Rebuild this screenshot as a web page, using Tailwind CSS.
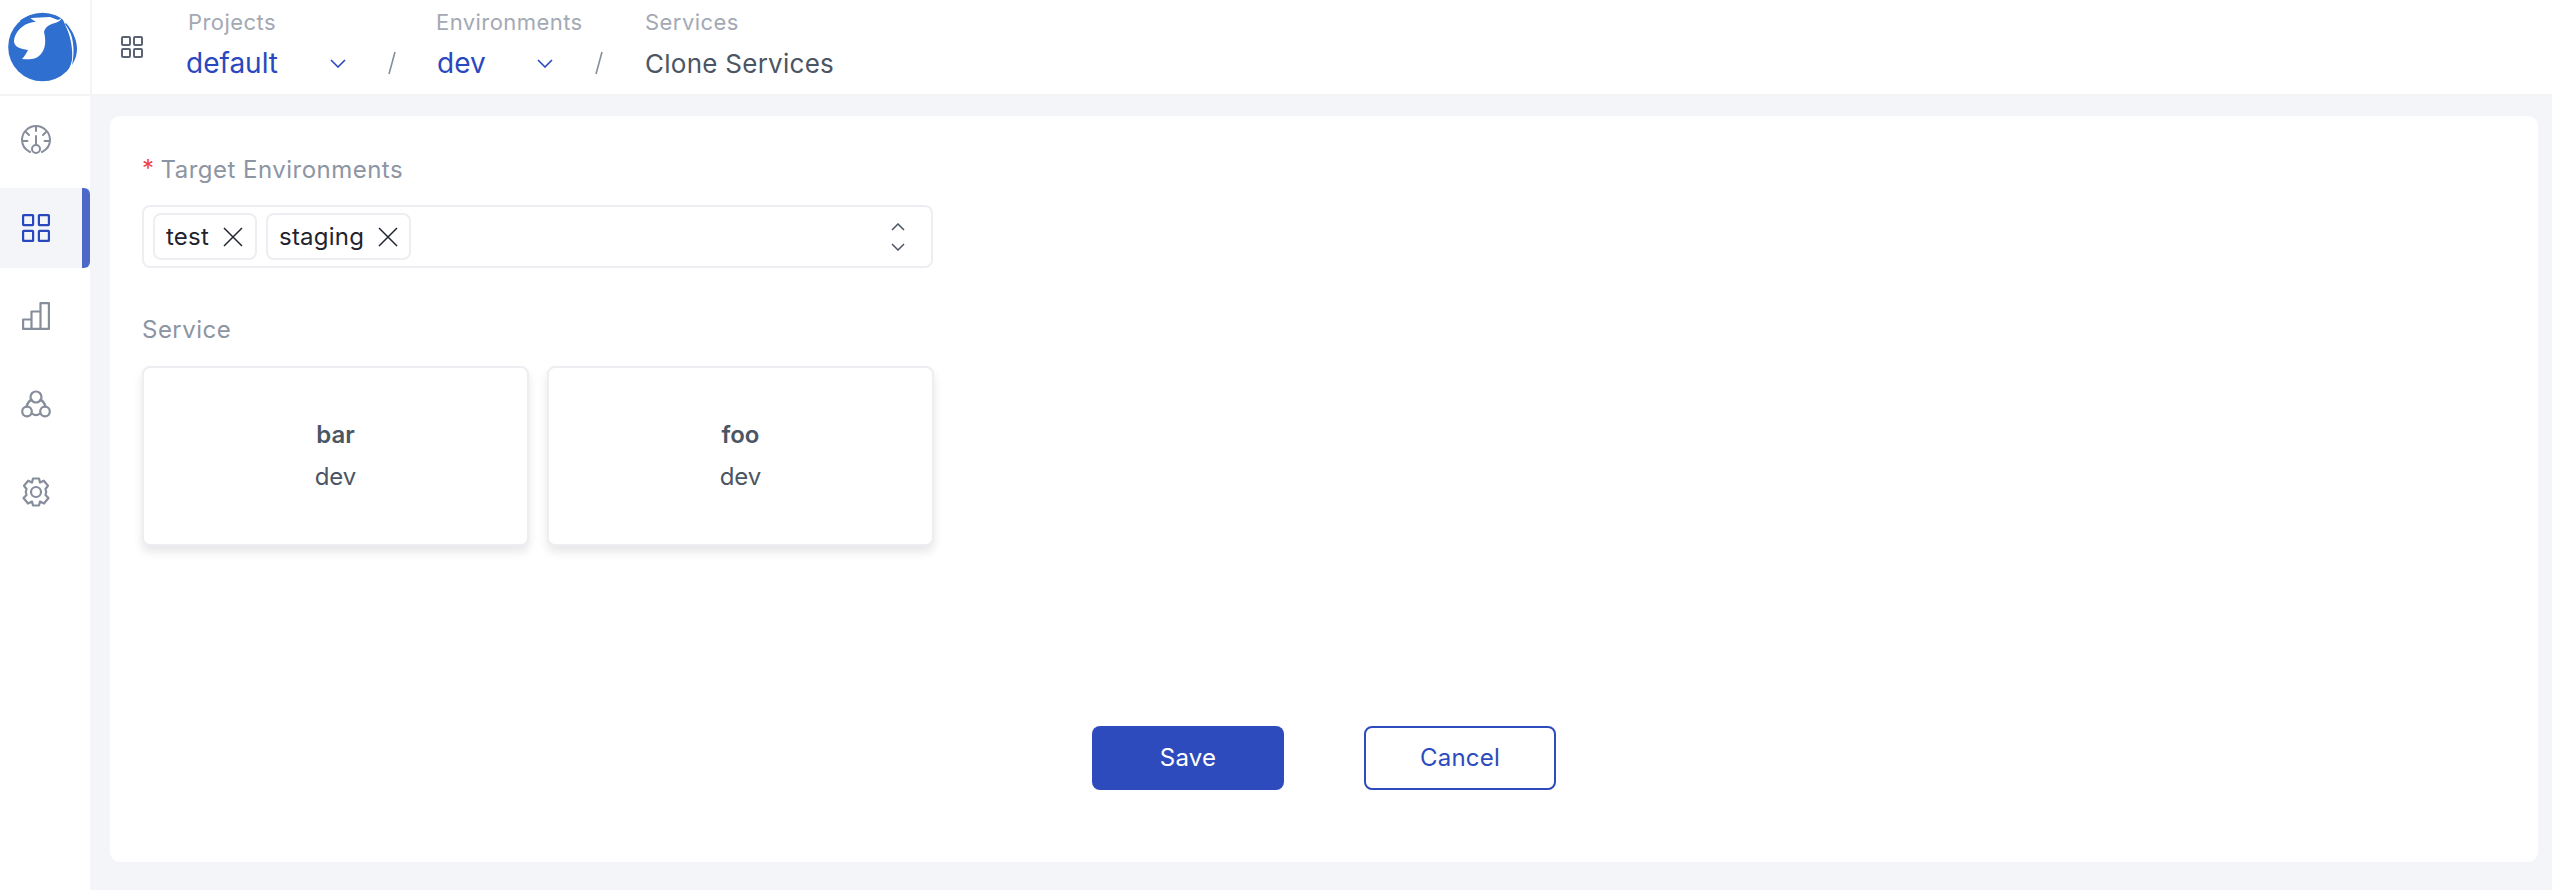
<!DOCTYPE html>
<html>
<head>
<meta charset="utf-8">
<script src="https://cdn.jsdelivr.net/npm/@tailwindcss/browser@4"></script>
</head>
<body class="bg-[#f4f5f9] font-['Inter',sans-serif]">
<div class="w-[2552px] h-[890px] flex flex-col overflow-hidden">
  <header class="h-[94px] bg-white flex shrink-0 border-b-2 border-[#f3f4f6] box-content">
    <div class="w-[92px] h-[94px] shrink-0 border-r-2 border-[#f3f4f6]">
      <svg width="90" height="94" viewBox="0 0 90 94">
        <circle cx="42.5" cy="47" r="34.3" fill="#2f6fd0"/>
        <path d="M36 22C24 22 14 32 14 42C15 47 20 49 28 50C26 54 24 57 22 59C30 60 37 59 41 54C46 48 46 40 44 32C45 27 50 24 55 23C58 22 60 21 62 18L58 20L50 17L30 18Z" fill="#fff"/>
        <path d="M20 20.5C28 15 41 12 51 15L50.5 16.5C41 15 30 17 22 23Z" fill="#2f6fd0"/>
        <path d="M62 18C64 21 65 25 67 29C71 38 73 50 72 60C71 66 68 71 64 77L78 70L80 40L70 16Z" fill="#fff"/>
        <path d="M66 23C73 31 77 40 77 49C77 55 75 60 72 65C74 56 74 46 72 38C71 33 68 28 65 24Z" fill="#2f6fd0"/>
      </svg>
    </div>
    <div class="flex items-center pl-[29px] pt-[0px]">
      <svg class="mt-[0px] w-[22px] h-[22px]" viewBox="0 0 22 22" fill="none" stroke="#5b6472" stroke-width="2"><rect x="1" y="1" width="8" height="8" rx="1"/><rect x="13" y="1" width="8" height="8" rx="1"/><rect x="1" y="13" width="8" height="8" rx="1"/><rect x="13" y="13" width="8" height="8" rx="1"/></svg>
    </div>
    <nav class="flex ml-[43px]">
      <div class="w-[250px] flex flex-col">
        <span class="text-[22px] leading-[28px] mt-[8px] ml-[2px] tracking-[0.02em] text-[#a3a9b4]">Projects</span>
        <div class="flex items-center h-[40px] mt-[7px]">
          <span class="text-[28px] text-[#2a48bd] w-[144px]">default</span>
          <svg class="w-[16px] h-[9px]" viewBox="0 0 16 9" fill="none" stroke="#2a48bd" stroke-width="1.6"><path d="M1 1l7 7 7-7"/></svg>
          <svg class="w-[8px] h-[24px] ml-[42px]" viewBox="0 0 8 24" fill="none" stroke="#868e9c" stroke-width="1.6"><path d="M7 1L1 23"/></svg>
        </div>
      </div>
      <div class="w-[209px] flex flex-col">
        <span class="text-[22px] leading-[28px] mt-[8px] tracking-[0.02em] text-[#a3a9b4]">Environments</span>
        <div class="flex items-center h-[40px] mt-[7px]">
          <span class="text-[28px] text-[#2a48bd] w-[100px] ml-[1px]">dev</span>
          <svg class="w-[16px] h-[9px]" viewBox="0 0 16 9" fill="none" stroke="#2a48bd" stroke-width="1.6"><path d="M1 1l7 7 7-7"/></svg>
          <svg class="w-[8px] h-[24px] ml-[42px]" viewBox="0 0 8 24" fill="none" stroke="#868e9c" stroke-width="1.6"><path d="M7 1L1 23"/></svg>
        </div>
      </div>
      <div class="flex flex-col">
        <span class="text-[22px] leading-[28px] mt-[8px] tracking-[0.02em] text-[#a3a9b4]">Services</span>
        <div class="flex items-center h-[40px] mt-[7px]">
          <span class="text-[26px] text-[#4b5563] tracking-[0.01em]">Clone Services</span>
        </div>
      </div>
    </nav>
  </header>
  <div class="flex flex-1 min-h-0">
    <aside class="w-[90px] bg-white shrink-0 pt-[4px] flex flex-col gap-[8px]">
      <div class="h-[80px] flex items-center justify-center pr-[18px]">
        <svg width="30" height="30" viewBox="0 0 30 30" fill="none" stroke="#868e9c" stroke-width="2" stroke-linecap="round"><path d="M9 27C4 24.5 1 20 1 15C1 7.3 7.3 1 15 1S29 7.3 29 15C29 20 26 24.5 21 27"/><path d="M15 2v4M5 7l3 3M25 7l-3 3M1.500 16h5M23.500 16h5M15 11v9"/><circle cx="15" cy="24" r="4"/></svg>
      </div>
      <div class="h-[80px] bg-[#f4f5f9] flex items-center justify-center pr-[18px] relative w-[90px]">
        <svg width="28" height="28" viewBox="0 0 28 28" fill="none" stroke="#2a48bd" stroke-width="2.200"><rect x="1.100" y="1.100" width="10" height="10" rx="0.500"/><rect x="16.900" y="1.100" width="10" height="10" rx="0.500"/><rect x="1.100" y="16.900" width="10" height="10" rx="0.500"/><rect x="16.900" y="16.900" width="10" height="10" rx="0.500"/></svg>
        <div class="absolute right-0 top-0 w-[8px] h-[80px] bg-[#4c68c9] rounded-r-[6px]"></div>
      </div>
      <div class="h-[80px] flex items-center justify-center pr-[18px]">
        <svg width="28" height="28" viewBox="0 0 28 28" fill="none" stroke="#868e9c" stroke-width="2.200" stroke-linejoin="round"><path d="M1.100 26.900V17.500H9.500V26.900ZM9.500 26.900V9.500H18.500V26.900ZM18.500 26.900V1.100H26.900V26.900ZM1.100 26.900H26.900"/></svg>
      </div>
      <div class="h-[80px] flex items-center justify-center pr-[18px]">
        <svg width="30" height="28" viewBox="0 0 30 28" fill="none" stroke="#868e9c" stroke-width="2.200" stroke-linecap="round"><circle cx="15" cy="7" r="5.500"/><circle cx="6" cy="21.500" r="4.800"/><circle cx="24" cy="21.500" r="4.800"/><path d="M10.500 9.500C7.500 11.500 6 14 5.500 16.500M19.500 9.500C22.500 11.500 24 14 24.500 16.500M11 23.500C13.500 25.500 16.500 25.500 19 23.500"/></svg>
      </div>
      <div class="h-[80px] flex items-center justify-center pr-[18px]">
        <svg width="30" height="30" viewBox="0 0 30 30" fill="none" stroke="#868e9c" stroke-width="2.200" stroke-linejoin="round"><path d="M12 1.500H18L19 5.500L22.800 3.700L27 8.800L24.500 12C25.500 14 25.500 16 24.500 18L27.500 21L23 26.500L19 24.500L18 28.500H12L11 24.500L7 26.500L2.500 21L5.500 18C4.500 16 4.500 14 5.500 12L3 8.800L7.200 3.700L11 5.500Z"/><circle cx="15" cy="15" r="5"/></svg>
      </div>
    </aside>
    <main class="flex-1 min-w-0 pt-[20px] pl-[20px] pr-[14px] pb-[28px]">
      <section class="h-full bg-white rounded-[10px] px-[32px] pt-[38px] flex flex-col">
        <label class="h-[32px] flex items-center text-[24px] tracking-[0.02em] text-[#8d95a3]"><span class="text-[#ef4444] mr-[6px] mt-[-2px]">*</span>Target Environments</label>
        <div class="mt-[19px] w-[791px] h-[63px] border-2 border-[#eceef1] rounded-[8px] flex items-center pl-[9px] pr-[26px]">
          <div class="h-[47px] w-[104px] border-2 border-[#eceef1] rounded-[8px] flex items-center pl-[11px] text-[#1f2430] text-[24px] gap-[14px]"><span class="tracking-[0.01em]">test</span><svg width="20" height="20" viewBox="0 0 20 20" stroke="#1f2430" stroke-width="1.500" fill="none"><path d="M1 1l18 18M19 1L1 19"/></svg></div>
          <div class="h-[47px] w-[145px] ml-[9px] border-2 border-[#eceef1] rounded-[8px] flex items-center pl-[11px] text-[#1f2430] text-[24px] gap-[14px]"><span class="tracking-[0.01em]">staging</span><svg width="20" height="20" viewBox="0 0 20 20" stroke="#1f2430" stroke-width="1.500" fill="none"><path d="M1 1l18 18M19 1L1 19"/></svg></div>
          <svg class="ml-auto" width="14" height="28" viewBox="0 0 14 28" fill="none" stroke="#4b5563" stroke-width="1.500"><path d="M1 7L7 1L13 7M1 21L7 27L13 21"/></svg>
        </div>
        <label class="mt-[46px] h-[32px] flex items-center text-[24px] tracking-[0.02em] text-[#8d95a3]">Service</label>
        <div class="mt-[20px] flex gap-[18px]">
          <div class="w-[387px] h-[180px] border-2 border-[#eceef1] rounded-[8px] bg-white shadow-[0_6px_10px_rgba(17,24,39,0.10)] flex flex-col items-center justify-center text-[24px] text-[#4b5563]"><span class="font-semibold leading-[42px]">bar</span><span class="leading-[42px]">dev</span></div>
          <div class="w-[387px] h-[180px] border-2 border-[#eceef1] rounded-[8px] bg-white shadow-[0_6px_10px_rgba(17,24,39,0.10)] flex flex-col items-center justify-center text-[24px] text-[#4b5563]"><span class="font-semibold leading-[42px]">foo</span><span class="leading-[42px]">dev</span></div>
        </div>
        <div class="mt-[180px] flex justify-center gap-[80px]">
          <button class="w-[192px] h-[64px] rounded-[8px] bg-[#2d4bbd] text-white text-[24px] tracking-[0.01em]">Save</button>
          <button class="w-[192px] h-[64px] rounded-[8px] border-2 border-[#2d4bbd] text-[#2d4bbd] text-[24px] tracking-[0.01em]">Cancel</button>
        </div>
      </section>
    </main>
  </div>
</div>
</body>
</html>
